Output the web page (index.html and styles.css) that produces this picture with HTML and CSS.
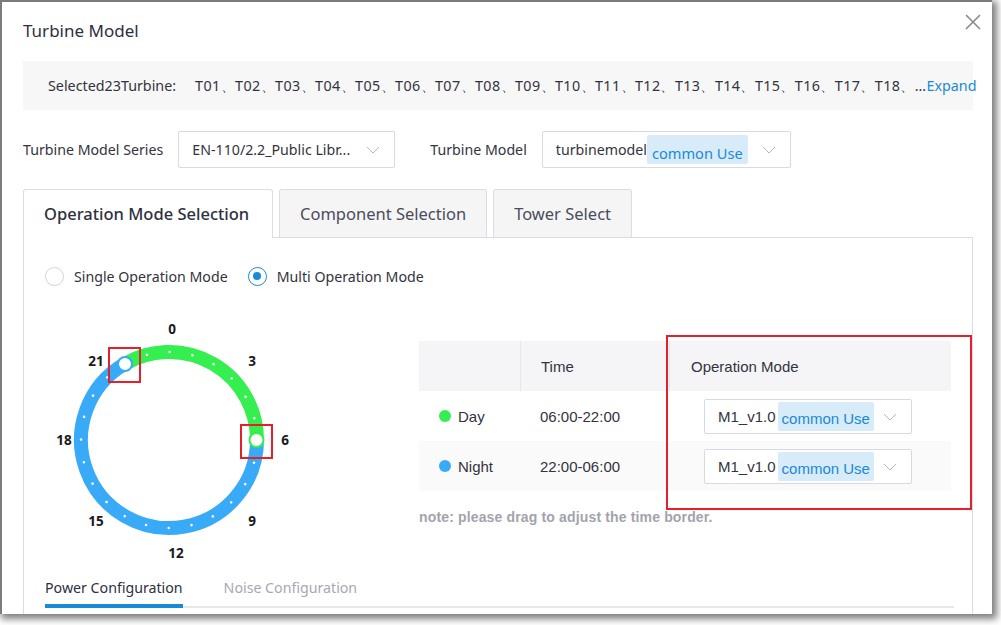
FILE: index.html
```html
<!DOCTYPE html>
<html>
<head>
<meta charset="utf-8">
<link rel="stylesheet" href="styles.css">
</head>
<body>
<div class="window">
  <div class="header">
    <div class="title">Turbine Model</div>
    <svg class="close" width="16" height="16" viewBox="0 0 16 16"><path d="M1 1 L15 15 M15 1 L1 15" stroke="#8a8a8a" stroke-width="1.6" fill="none"/></svg>
  </div>
  <div class="selected-bar">
    <span class="sel-label">Selected23Turbine:</span>
    <span class="sel-list">T01、T02、T03、T04、T05、T06、T07、T08、T09、T10、T11、T12、T13、T14、T15、T16、T17、T18、…</span><span class="expand">Expand</span>
  </div>
  <div class="form-row">
    <span class="form-label">Turbine Model Series</span>
    <div class="select select-series">
      <span class="select-text">EN-110/2.2_Public Libr...</span>
      <svg class="chev" width="14" height="8" viewBox="0 0 14 8"><path d="M1 1 L7 7 L13 1" fill="none" stroke="#b6b6c2" stroke-width="1"/></svg>
    </div>
    <span class="form-label label-model">Turbine Model</span>
    <div class="select select-model">
      <span class="select-text">turbinemodel</span><span class="tag">common Use</span>
      <svg class="chev" width="14" height="8" viewBox="0 0 14 8"><path d="M1 1 L7 7 L13 1" fill="none" stroke="#b6b6c2" stroke-width="1"/></svg>
    </div>
  </div>
  <div class="tabs">
    <div class="tab active">Operation Mode Selection</div>
    <div class="tab">Component Selection</div>
    <div class="tab">Tower Select</div>
  </div>
  <div class="pane">
    <div class="radio-row">
      <label class="radio"><span class="radio-circle"></span>Single Operation Mode</label>
      <label class="radio checked"><span class="radio-circle"></span>Multi Operation Mode</label>
    </div>
    <div class="mode-body">
      <svg class="clock" width="300" height="260" viewBox="24 310 300 260">
        <path d="M257 440 A88 88 0 1 1 125 363.8" fill="none" stroke="#38aaf8" stroke-width="14"/>
        <path d="M125 363.8 A88 88 0 0 1 257 440" fill="none" stroke="#35ee4f" stroke-width="14"/>
        <circle cx="169" cy="440" r="88" fill="none" stroke="#ffffff" stroke-width="2.6" stroke-linecap="round" stroke-dasharray="0.01 23.028"/>
        <circle cx="125" cy="364" r="7" fill="#fff" stroke="#38aaf8" stroke-width="2"/>
        <circle cx="256.5" cy="440" r="7" fill="#fff" stroke="#35ee4f" stroke-width="2"/>
        <rect x="109" y="348" width="31" height="34" fill="none" stroke="#e5202b" stroke-width="2"/>
        <rect x="241" y="425" width="31" height="33" fill="none" stroke="#e5202b" stroke-width="2"/>
        <g class="hours">
          <text x="172" y="329">0</text>
          <text x="252" y="361">3</text>
          <text x="285" y="440">6</text>
          <text x="252" y="521">9</text>
          <text x="176" y="553">12</text>
          <text x="96" y="521">15</text>
          <text x="64" y="440">18</text>
          <text x="96" y="361">21</text>
        </g>
      </svg>
      <div class="table-col">
        <div class="table-wrap">
          <div class="trow thead">
            <div class="c1"></div>
            <div class="c2 divided">Time</div>
            <div class="c3 divided">Operation Mode</div>
          </div>
          <div class="trow">
            <div class="c1"><span class="dot green"></span>Day</div>
            <div class="c2">06:00-22:00</div>
            <div class="c3">
              <div class="select select-op">
                <span class="select-text">M1_v1.0</span><span class="tag">common Use</span>
                <svg class="chev" width="14" height="8" viewBox="0 0 14 8"><path d="M1 1 L7 7 L13 1" fill="none" stroke="#b6b6c2" stroke-width="1"/></svg>
              </div>
            </div>
          </div>
          <div class="trow striped">
            <div class="c1"><span class="dot blue"></span>Night</div>
            <div class="c2">22:00-06:00</div>
            <div class="c3">
              <div class="select select-op">
                <span class="select-text">M1_v1.0</span><span class="tag">common Use</span>
                <svg class="chev" width="14" height="8" viewBox="0 0 14 8"><path d="M1 1 L7 7 L13 1" fill="none" stroke="#b6b6c2" stroke-width="1"/></svg>
              </div>
            </div>
          </div>
          <div class="highlight-box"></div>
        </div>
        <div class="note">note: please drag to adjust the time border.</div>
      </div>
    </div>
    <div class="subtabs">
      <div class="subtab active">Power Configuration</div>
      <div class="subtab">Noise Configuration</div>
    </div>
  </div>
</div>
</body>
</html>
```
FILE: styles.css
```css
* { box-sizing: border-box; }
html, body { margin: 0; padding: 0; background: #fff; }
body {
  font-family: "Noto Sans", "Open Sans", sans-serif;
  color: #333340;
  width: 1001px;
  height: 625px;
  overflow: hidden;
}
.window {
  position: relative;
  width: 992px;
  height: 614px;
  background: #fff;
  border-top: 2px solid #7c7c7c;
  border-left: 2px solid #7c7c7c;
  box-shadow: 3px 3px 7px 2px rgba(0,0,0,0.5);
  padding: 0 19px 0 21px;
  display: flex;
  flex-direction: column;
  overflow: hidden;
}
.header {
  padding-top: 17px;
  height: 59px;
}
.title {
  font-size: 17px;
  line-height: 24px;
  color: #2e3040;
}
.close {
  position: absolute;
  right: 11px;
  top: 12px;
}
.selected-bar {
  height: 49px;
  background: #f7f7f7;
  display: flex;
  align-items: center;
  padding-left: 25px;
  font-size: 14.3px;
  white-space: nowrap;
  color: #333340;
}
.sel-label { margin-right: 19px; }
.sel-list { letter-spacing: 0.42px; }
.expand { color: #1a8ad6; }
.form-row {
  margin-top: 21px;
  height: 37px;
  display: flex;
  align-items: center;
  font-size: 14.2px;
}
.form-label { color: #333340; margin-right: 15px; }
.label-model { margin-left: 35px; }
.select {
  position: relative;
  height: 37px;
  border: 1px solid #d9d9e3;
  border-radius: 2px;
  display: flex;
  align-items: center;
  padding-left: 13px;
  background: #fff;
}
.select-series { width: 217px; }
.select-model { width: 249px; }
.select-text { color: #333340; white-space: nowrap; }
.tag {
  background: #d7ebf8;
  color: #1a8ad6;
  font-size: 14.6px;
  height: 29px;
  line-height: 37px;
  padding: 0 5px;
  border-radius: 2px;
  overflow: hidden;
  white-space: nowrap;
}
.chev {
  position: absolute;
  right: 14px;
  top: 14px;
}
.tabs {
  margin-top: 21px;
  display: flex;
  gap: 6px;
  height: 48px;
  position: relative;
  z-index: 1;
}
.tab {
  height: 48px;
  border: 1px solid #dcdce6;
  border-bottom: none;
  border-radius: 3px 3px 0 0;
  background: #f5f5f6;
  font-size: 16.5px;
  color: #4a4c5c;
  padding: 0 20px;
  line-height: 48px;
  white-space: nowrap;
}
.tab.active {
  background: #fff;
  width: 250px;
  color: #2e3040;
  font-weight: 500;
  height: 49px;
}
.pane {
  flex: 1;
  border: 1px solid #dcdce6;
  border-bottom: none;
  margin-top: 0;
}
.radio-row {
  padding: 27px 0 0 21px;
  height: 49px;
  display: flex;
  gap: 20px;
  font-size: 14.2px;
}
.radio {
  display: flex;
  align-items: center;
  height: 22px;
  color: #333340;
}
.radio-circle {
  width: 19px;
  height: 19px;
  border: 1px solid #d3d3dc;
  border-radius: 50%;
  margin-right: 10px;
  position: relative;
}
.radio.checked .radio-circle { border-color: #1a8ad6; }
.radio.checked .radio-circle::after {
  content: "";
  position: absolute;
  left: 4.5px;
  top: 4.5px;
  width: 8px;
  height: 8px;
  border-radius: 50%;
  background: #1a8ad6;
}
.mode-body {
  margin-top: 23px;
  display: flex;
  height: 260px;
}
.clock { display: block; flex: none; }
.hours text {
  font-family: "Noto Sans", sans-serif;
  font-weight: 700;
  font-size: 13.5px;
  fill: #1a1a20;
  text-anchor: middle;
  dominant-baseline: central;
}
.table-col {
  margin-left: 95px;
  padding-top: 31px;
  font-family: "Liberation Sans", Arial, sans-serif;
}
.table-wrap {
  position: relative;
  width: 532px;
}
.trow {
  display: flex;
  height: 50px;
  align-items: center;
  font-size: 15px;
  color: #333340;
}
.thead { background: #f5f5f7; }
.striped { background: #fafafa; }
.c1 { width: 101px; padding-left: 20px; display: flex; align-items: center; height: 100%; }
.c2 { width: 149px; padding-left: 20px; display: flex; align-items: center; height: 100%; }
.c3 { flex: 1; padding-left: 21px; display: flex; align-items: center; height: 100%; }
.divided { border-left: 1px solid #e6e6ea; }
.trow:not(.thead) .c3 { padding-left: 35px; }
.dot {
  width: 12px;
  height: 12px;
  border-radius: 50%;
  margin-right: 7px;
}
.dot.green { background: #35ee4f; }
.dot.blue { background: #38aaf8; }
.select-op {
  width: 208px;
  height: 35px;
  font-size: 15px;
}
.select-op .chev { top: 13px; right: 14px; }
.select-op .tag { height: 29px; line-height: 33px; margin-left: 2px; padding: 0 4px; font-size: 15px; }
.highlight-box {
  position: absolute;
  left: 247px;
  top: -6px;
  width: 306px;
  height: 175px;
  border: 2px solid #e5202b;
}
.note {
  margin-top: 18px;
  font-size: 14px;
  font-weight: 700;
  letter-spacing: 0.15px;
  color: #a3a3ad;
}
.subtabs {
  margin-left: 21px;
  width: 909px;
  display: flex;
  gap: 41px;
  border-bottom: 2px solid #e8e8ec;
  height: 33px;
  margin-top: 5px;
  font-size: 14.2px;
}
.subtab {
  color: #a8a8b2;
  line-height: 26px;
}
.subtab.active {
  color: #2e3040;
  border-bottom: 4px solid #1a8ad6;
  margin-bottom: -2px;
}
```
